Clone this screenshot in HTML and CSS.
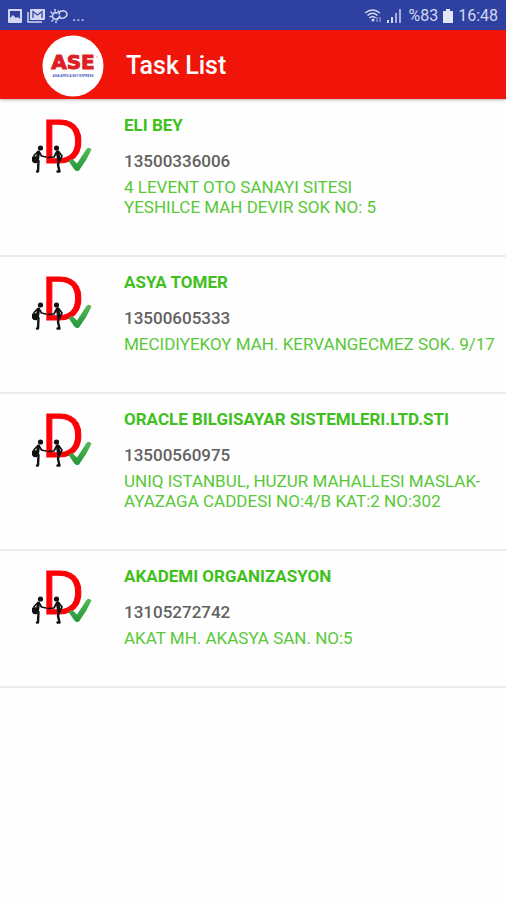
FILE: index.html
```html
<!DOCTYPE html>
<html lang="tr">
<head>
<meta charset="utf-8">
<meta name="viewport" content="width=device-width, initial-scale=1">
<title>Task List</title>
<link rel="stylesheet" href="styles.css">
</head>
<body>
<svg class="sprite" aria-hidden="true">
  <defs>
    <linearGradient id="tick" x1="0" y1="0" x2="0" y2="1">
      <stop offset="0" stop-color="#58b95a"/>
      <stop offset="1" stop-color="#23963a"/>
    </linearGradient>
    <symbol id="delivery" viewBox="0 0 64 56">
      <text class="letter-d" x="11" y="46">D</text>
      <g fill="none" stroke="#111" stroke-linecap="round" stroke-linejoin="round">
        <path stroke-width="3.2" d="M8.500 35 L7.500 42"/>
        <path stroke-width="2.4" d="M5 43 L8.500 44 L8 54.500 L7 54.500"/>
        <path stroke-width="1.700" d="M9.500 35.500 L11.500 39 L16 40 M7.500 35 L4 38.500"/>
        <path stroke-width="3.600" d="M27.500 35 L29 43"/>
        <path stroke-width="2.400" d="M29 43 L28 48 L29.500 54.500 L27.500 54.500"/>
        <path stroke-width="1.700" d="M26 36 L24 40 L18 40.500 M29 35 L32 39 L30 43"/>
      </g>
      <circle cx="10.500" cy="31" r="2.600" fill="#111"/>
      <circle cx="26.500" cy="31" r="2.600" fill="#111"/>
      <path d="M2 40 Q4 38 7 40 L7 46 Q3 47 2 44 Z" fill="#111"/>
      <path d="M38.500 44 Q41 41 43.500 43 L47 46.500 L56.500 32 Q59 29.500 61.500 32.500 Q57 43 49 53.500 Q46 55 44 52 Z" fill="url(#tick)"/>
    </symbol>
  </defs>
</svg>

<div class="status">
  <div class="status-group">
    <svg width="16" height="16" viewBox="0 0 16 16" aria-hidden="true">
      <path fill-rule="evenodd" fill="#d3d7f2" d="M2 1 H14 Q15 1 15 2 V14 Q15 15 14 15 H2 Q1 15 1 14 V2 Q1 1 2 1 Z M3 3 V10 L6 7 L9 10 L11 9 L13 11 V3 Z"/>
      <path d="M3 12 L6 9.500 L8 12 L11 10 L13 13 H3 Z" fill="#d3d7f2"/>
    </svg>
    <svg width="20" height="16" viewBox="0 0 20 16" aria-hidden="true">
      <path d="M2 4 V14 H16" fill="none" stroke="#d3d7f2" stroke-width="1.500"/>
      <rect x="4" y="1" width="15" height="11" rx="1" fill="#d3d7f2"/>
      <path d="M7 10 V3.500 L11.500 7 L16 3.500 V10" fill="none" stroke="#3346a5" stroke-width="1.300"/>
    </svg>
    <svg width="20" height="16" viewBox="0 0 20 16" aria-hidden="true">
      <g fill="none" stroke="#d3d7f2" stroke-width="1.500" stroke-linecap="round">
        <path d="M8 5 A3.200 3.200 0 1 0 8.500 10.500"/>
        <path d="M6 1.500 V3 M2 4 L3 5 M1 8.500 H2 M3 13 L4 12 M7 14.500 V13.500 M9.500 3 L9 4"/>
        <path d="M8 12 L11 8 M10 6 Q10 3 13 3 Q15 2 17 4 Q19 6 17 8.500 Q15 11 11 10"/>
      </g>
    </svg>
    <span class="dots">...</span>
  </div>
  <div class="status-group status-right">
    <svg width="40" height="16" viewBox="0 0 40 16" aria-hidden="true">
      <g fill="none" stroke="#d3d7f2" stroke-width="1.600">
        <path d="M1 5 Q8.500 -1 16 5"/>
        <path d="M3.500 7.500 Q8.500 3 13.500 7.500"/>
        <path d="M5.500 10 Q8.500 7 11.500 10"/>
      </g>
      <circle cx="9" cy="12" r="1.500" fill="#d3d7f2"/>
      <path d="M13 9 V14 M16 9 V14" stroke="#8c98d0" stroke-width="1.300"/>
      <path d="M23 12 h2 v3 h-2 Z M27 9 h2 v6 h-2 Z" fill="#d3d7f2"/>
      <path d="M31 5 h2 v10 h-2 Z M35 1 h2 v14 h-2 Z" fill="#a4addc"/>
    </svg>
    <span>%83</span>
    <svg width="12" height="16" viewBox="0 0 12 16" aria-hidden="true">
      <path d="M4 1 H8 V3 H11 V15 H1 V3 H4 Z" fill="#e4e7f8"/>
    </svg>
    <span class="clock">16:48</span>
  </div>
</div>

<header class="bar">
  <svg class="logo" width="62" height="62" viewBox="0 0 62 62" role="img" aria-label="ASE">
    <circle cx="31" cy="31" r="30.500" fill="#fff"/>
    <text class="logo-name" x="31" y="34" text-anchor="middle">ASE</text>
    <text class="logo-tag" x="31" y="42" text-anchor="middle">ASIA AFRICA SKY EXPRESS</text>
    <circle cx="55" cy="22" r="0.700" fill="#e77"/>
  </svg>
  <h1>Task List</h1>
</header>

<main>
  <ul class="tasks">
    <li class="task">
      <svg class="task-icon" width="64" height="56" aria-hidden="true"><use href="#delivery"/></svg>
      <div class="task-body">
        <h2>ELI BEY</h2>
        <p class="number">13500336006</p>
        <p class="address">4 LEVENT OTO SANAYI SITESI<br>YESHILCE MAH DEVIR SOK NO: 5</p>
      </div>
    </li>
    <li class="task">
      <svg class="task-icon" width="64" height="56" aria-hidden="true"><use href="#delivery"/></svg>
      <div class="task-body">
        <h2>ASYA TOMER</h2>
        <p class="number">13500605333</p>
        <p class="address">MECIDIYEKOY MAH. KERVANGECMEZ SOK. 9/17</p>
      </div>
    </li>
    <li class="task">
      <svg class="task-icon" width="64" height="56" aria-hidden="true"><use href="#delivery"/></svg>
      <div class="task-body">
        <h2>ORACLE BILGISAYAR SISTEMLERI.LTD.STI</h2>
        <p class="number">13500560975</p>
        <p class="address">UNIQ ISTANBUL, HUZUR MAHALLESI MASLAK-<br>AYAZAGA CADDESI NO:4/B KAT:2 NO:302</p>
      </div>
    </li>
    <li class="task">
      <svg class="task-icon" width="64" height="56" aria-hidden="true"><use href="#delivery"/></svg>
      <div class="task-body">
        <h2>AKADEMI ORGANIZASYON</h2>
        <p class="number">13105272742</p>
        <p class="address">AKAT MH. AKASYA SAN. NO:5</p>
      </div>
    </li>
  </ul>
</main>
</body>
</html>
```
FILE: styles.css
```css
* {
  box-sizing: border-box;
}

body {
  margin: 0;
  background: #fefefe;
  font-family: Roboto, "Liberation Sans", sans-serif;
}

h1,
h2,
p,
ul {
  margin: 0;
  padding: 0;
}

.sprite {
  display: block;
  width: 0;
  height: 0;
}

.status {
  display: flex;
  justify-content: space-between;
  align-items: center;
  height: 30px;
  padding: 2px 8px 0 7px;
  background: #2f41a0;
  color: #d3d7f2;
  font-size: 16px;
  line-height: 20px;
}

.status-group {
  display: flex;
  align-items: center;
  gap: 3px;
}

.status-right {
  gap: 4px;
}

.bar {
  display: flex;
  align-items: center;
  gap: 22px;
  height: 69px;
  padding: 2px 42px 0;
  background: #f11509;
  box-shadow: 0 1px 3px rgba(0, 0, 0, 0.3);
}

.bar h1 {
  color: #fff;
  font-size: 25px;
  font-weight: 500;
  line-height: 32px;
}

.logo {
  flex: none;
}

.logo-name {
  fill: #dc1f26;
  stroke: #dc1f26;
  stroke-width: 1px;
  font: bold 20px "DejaVu Sans", sans-serif;
}

.logo-tag {
  fill: #3d4fc0;
  font: bold 3px "Liberation Sans", sans-serif;
}

.letter-d {
  fill: #fb0007;
  stroke: #fb0007;
  stroke-width: 1px;
  font: 60px "Open Sans", sans-serif;
}

.tasks {
  padding-top: 1px;
  list-style: none;
}

.task {
  display: flex;
  gap: 30px;
  padding: 15px 4px 38px 30px;
  border-bottom: 2px solid #ececec;
}

.task-icon {
  flex: none;
  margin-top: 2px;
}

.task-body {
  flex: 1;
  min-width: 0;
}

.task h2 {
  color: #40c01c;
  font-size: 17px;
  font-weight: 700;
  line-height: 20px;
}

.number {
  margin-top: 16px;
  color: #616161;
  font-size: 17px;
  font-weight: 500;
  line-height: 20px;
}

.address {
  margin-top: 6px;
  color: #58c838;
  font-size: 17px;
  font-weight: 400;
  line-height: 20px;
}
```
